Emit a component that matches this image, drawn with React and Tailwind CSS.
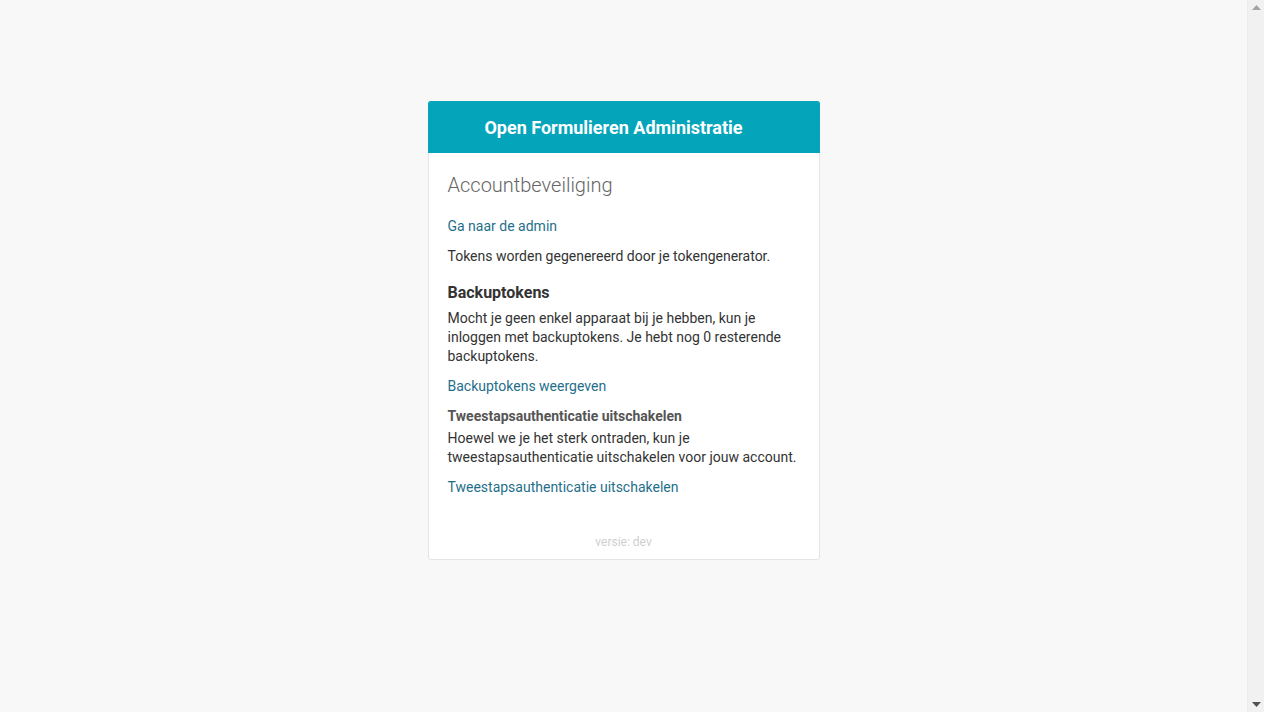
import React from 'react';

const Link = ({ children, className = '' }) => (
  <a href="#" className={`block text-[14px] leading-[19px] text-[#1f6f8b] no-underline ${className}`}>
    {children}
  </a>
);

const Scrollbar = () => (
  <div className="flex w-[17px] shrink-0 flex-col items-center justify-between border-l border-[#ececec] bg-[#f1f1f1] py-[5px]">
    <svg width="9" height="5" viewBox="0 0 9 5">
      <path d="M4.5 0 L9 5 L0 5 Z" fill="#a3a3a3" />
    </svg>
    <svg width="9" height="5" viewBox="0 0 9 5">
      <path d="M0 0 L9 0 L4.5 5 Z" fill="#505050" />
    </svg>
  </div>
);

export default function App() {
  return (
    <div
      className="flex h-screen bg-[#f8f8f8] text-[#333]"
      style={{ fontFamily: 'Roboto, "Liberation Sans", sans-serif' }}
    >
      <div className="flex flex-1 justify-center pt-[101px]">
        <div className="h-fit w-[392px] rounded-[3px] border border-[#e4e4e4] bg-white">
          <div className="-mx-px -mt-px flex h-[52px] items-center justify-center rounded-t-[3px] bg-[#04a5bb] pr-[20px]">
            <h1 className="text-[18px] font-bold text-white">Open Formulieren Administratie</h1>
          </div>

          <div className="px-[19px] pt-[20px] pb-[9px]">
            <h2 className="text-[20px] font-light leading-[24px] text-[#666]">Accountbeveiliging</h2>

            <Link className="mt-[20px]">Ga naar de admin</Link>

            <p className="mt-[11px] text-[14px] leading-[19px]">
              Tokens worden gegenereerd door je tokengenerator.
            </p>

            <h3 className="mt-[17px] text-[16px] font-bold leading-[20px]">Backuptokens</h3>
            <p className="mt-[6px] text-[14px] leading-[19px]">
              Mocht je geen enkel apparaat bij je hebben, kun je inloggen met backuptokens. Je hebt nog 0
              resterende backuptokens.
            </p>

            <Link className="mt-[11px]">Backuptokens weergeven</Link>

            <h4 className="mt-[11px] text-[14px] font-bold leading-[19px] text-[#555]">
              Tweestapsauthenticatie uitschakelen
            </h4>
            <p className="mt-[3px] text-[14px] leading-[19px]">
              Hoewel we je het sterk ontraden, kun je tweestapsauthenticatie uitschakelen voor jouw account.
            </p>

            <Link className="mt-[11px]">Tweestapsauthenticatie uitschakelen</Link>

            <p className="mt-[37px] text-center text-[12px] leading-[16px] text-[#cfcfcf]">versie: dev</p>
          </div>
        </div>
      </div>
      <Scrollbar />
    </div>
  );
}
